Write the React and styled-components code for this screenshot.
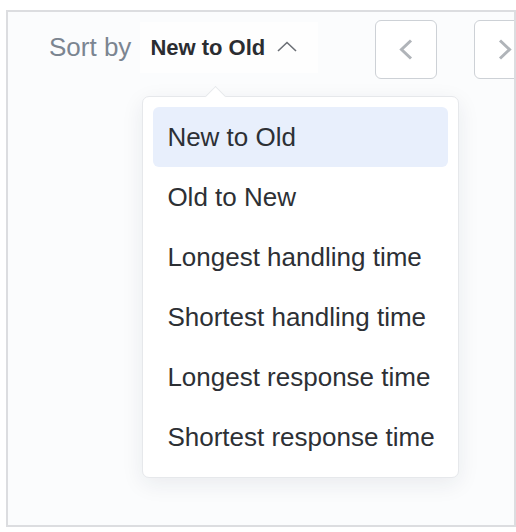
import React, { useState } from "react";
import styled, { createGlobalStyle } from "styled-components";

const GlobalStyle = createGlobalStyle`
  html, body {
    margin: 0;
    padding: 0;
    background: #ffffff;
    font-family: "Liberation Sans", Arial, sans-serif;
  }
`;

const options = [
  "New to Old",
  "Old to New",
  "Longest handling time",
  "Shortest handling time",
  "Longest response time",
  "Shortest response time",
];

const App = () => {
  const [selected, setSelected] = useState(options[0]);

  return (
    <Page>
      <GlobalStyle />
      <Panel>
        <Toolbar>
          <SortLabel>Sort by</SortLabel>
          <SortWrap>
            <Trigger>
              <span>{selected}</span>
              <svg width="20" height="11" viewBox="0 0 20 11" fill="none">
                <path
                  d="M1 10 L10 1.5 L19 10"
                  stroke="#6b6f75"
                  strokeWidth="1.6"
                />
              </svg>
            </Trigger>
            <Menu>
              {options.map((opt) => (
                <MenuItem
                  key={opt}
                  $active={opt === selected}
                  onClick={() => setSelected(opt)}
                >
                  {opt}
                </MenuItem>
              ))}
            </Menu>
          </SortWrap>
          <PagerButton $first>
            <svg width="14" height="21" viewBox="0 0 14 21" fill="none">
              <path
                d="M12 1.5 L2.5 10.5 L12 19.5"
                stroke="#b0b4b9"
                strokeWidth="3"
              />
            </svg>
          </PagerButton>
          <PagerButton>
            <svg width="14" height="21" viewBox="0 0 14 21" fill="none">
              <path
                d="M2 1.5 L11.5 10.5 L2 19.5"
                stroke="#b0b4b9"
                strokeWidth="3"
              />
            </svg>
          </PagerButton>
        </Toolbar>
      </Panel>
    </Page>
  );
};

export default App;

export const Page = styled.div`
  width: 516px;
  height: 532px;
  padding: 10px 0 0 6px;
  box-sizing: border-box;
  overflow: hidden;
`;

export const Panel = styled.div`
  width: 510px;
  height: 517px;
  box-sizing: border-box;
  border: 2px solid #dcdde0;
  background: #fbfcfd;
  overflow: hidden;
  position: relative;
`;

export const Toolbar = styled.div`
  display: flex;
  align-items: flex-start;
  padding: 8px 0 0 41px;
  width: max-content;
`;

export const SortLabel = styled.div`
  flex: none;
  white-space: nowrap;
  font-size: 26px;
  color: #7b8591;
  margin: 14px 9px 0 0;
  line-height: 1;
`;

export const SortWrap = styled.div`
  position: relative;
  flex: none;
  margin-top: 2px;
`;

export const Trigger = styled.div`
  display: flex;
  align-items: center;
  height: 51px;
  width: 178px;
  box-sizing: border-box;
  padding: 0 0 0 10px;
  background: #fefefe;
  font-size: 22px;
  font-weight: bold;
  color: #2b2d31;
  white-space: nowrap;
  gap: 12px;
  cursor: pointer;

  svg {
    margin-top: -3px;
  }
`;

export const Menu = styled.div`
  position: absolute;
  top: 74px;
  left: 2px;
  width: 317px;
  box-sizing: border-box;
  padding: 10px;
  background: #ffffff;
  border: 1px solid #e6e8eb;
  border-radius: 7px;
  box-shadow: 0 6px 22px rgba(30, 40, 60, 0.08);
  z-index: 5;

  &::before {
    content: "";
    position: absolute;
    top: -8px;
    left: 65px;
    width: 14px;
    height: 14px;
    background: #ffffff;
    border-top: 1px solid #e6e8eb;
    border-left: 1px solid #e6e8eb;
    transform: rotate(45deg);
  }
`;

export const MenuItem = styled.div`
  position: relative;
  height: 60px;
  display: flex;
  align-items: center;
  padding-left: 14px;
  font-size: 26px;
  color: #2d3035;
  white-space: nowrap;
  border-radius: 6px;
  background: ${(p) => (p.$active ? "#e8effc" : "transparent")};
  cursor: pointer;
`;

export const PagerButton = styled.button`
  flex: none;
  width: 62px;
  height: 59px;
  margin-left: ${(p) => (p.$first ? "57px" : "37px")};
  box-sizing: border-box;
  border: 1.5px solid #cdd1d6;
  border-radius: 6px;
  background: #ffffff;
  display: flex;
  align-items: center;
  justify-content: center;
  padding: 0;
  cursor: pointer;
`;
